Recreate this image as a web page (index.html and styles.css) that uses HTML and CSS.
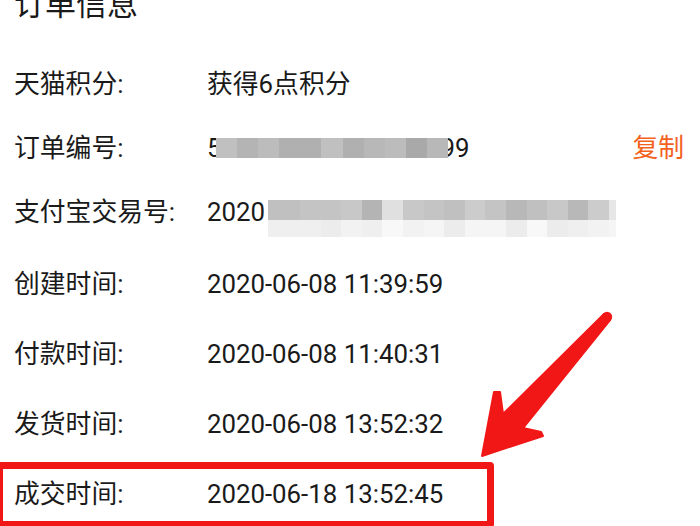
FILE: index.html
```html
<!DOCTYPE html>
<html lang="zh-CN">
<head>
<meta charset="utf-8">
<title>订单信息</title>
<link rel="stylesheet" href="styles.css">
</head>
<body>
<div class="page">
  <h2 class="title">订单信息</h2>
  <div class="rows">
    <div class="row short">
      <span class="label">天猫积分:</span>
      <span class="value">获得6点积分</span>
    </div>
    <div class="row short">
      <span class="label">订单编号:</span>
      <span class="value">
        <span class="txt">5</span>
        <span class="mosaic order">
          <i class="g-c0"></i><i class="g-b4"></i><i class="g-bc"></i><i class="g-b0"></i><i class="g-b0"></i><i class="g-c0"></i><i class="g-b0"></i><i class="g-b8"></i><i class="g-bc"></i><i class="g-a9"></i><i class="g-b8"></i>
        </span>
        <span class="txt tail">99</span>
      </span>
      <span class="copy">复制</span>
    </div>
    <div class="row alipay">
      <span class="label">支付宝交易号:</span>
      <span class="value top">
        <span class="txt">2020</span>
        <span class="mosaic pay">
          <i class="g-c0"></i><i class="g-c4"></i><i class="g-c4"></i><i class="g-c8"></i><i class="g-b4"></i><i class="g-e0"></i><i class="g-c8"></i><i class="g-c4"></i><i class="g-c0"></i><i class="g-cc"></i><i class="g-c4"></i><i class="g-b8"></i><i class="g-c0"></i><i class="g-c8"></i><i class="g-b8"></i><i class="g-cc"></i><i class="g-e6"></i>
          <i class="g-ef"></i><i class="g-ef"></i><i class="g-ec"></i><i class="g-f2"></i><i class="g-ef"></i><i class="g-f8"></i><i class="g-f2"></i><i class="g-f5"></i><i class="g-ec"></i><i class="g-f5"></i><i class="g-f5"></i><i class="g-ec"></i><i class="g-f8"></i><i class="g-ec"></i><i class="g-ef"></i><i class="g-f2"></i><i class="g-f5"></i>
        </span>
      </span>
    </div>
    <div class="row">
      <span class="label">创建时间:</span>
      <span class="value">2020-06-08 11:39:59</span>
    </div>
    <div class="row">
      <span class="label">付款时间:</span>
      <span class="value">2020-06-08 11:40:31</span>
    </div>
    <div class="row">
      <span class="label">发货时间:</span>
      <span class="value">2020-06-08 13:52:32</span>
    </div>
    <div class="row">
      <span class="label">成交时间:</span>
      <span class="value">2020-06-18 13:52:45</span>
    </div>
  </div>
  <div class="highlight"></div>
  <svg class="arrow" viewBox="0 0 700 526" width="700" height="526" aria-hidden="true">
    <path d="M604 314 L503 414 L500 392 L494 392 L482 456 L543 436 L541 432 L523 428 L610 320 Z" />
    <circle cx="607" cy="317" r="4.2" />
  </svg>
</div>
</body>
</html>
```

FILE: styles.css
```css
html, body {
  margin: 0;
  padding: 0;
  background: #ffffff;
  overflow: hidden;
}

.page {
  position: relative;
  display: flow-root;
  width: 700px;
  height: 526px;
  overflow: hidden;
  box-sizing: border-box;
  padding: 0 16px 0 14px;
  font-family: Roboto, "Noto Sans CJK SC", sans-serif;
  font-size: 25.8px;
  line-height: 30px;
  color: #1a1a1a;
}

.title {
  margin: -18px 0 0;
  height: 70px;
  font-family: "Noto Sans CJK SC", sans-serif;
  font-size: 31px;
  font-weight: normal;
  line-height: 40px;
  color: #1a1a1a;
}

.row {
  display: flex;
  align-items: center;
  height: 70px;
}

.row.short {
  height: 64px;
}

.row.alipay {
  height: 69px;
  align-items: flex-start;
  box-sizing: border-box;
  padding-top: 17px;
}

.label {
  flex: none;
  width: 193px;
  white-space: nowrap;
}

.value {
  flex: 1;
  display: flex;
  align-items: center;
  white-space: nowrap;
}

.value.top {
  align-items: flex-start;
}

.copy {
  flex: none;
  color: #f3611d;
}

.mosaic {
  position: relative;
  z-index: 1;
  display: grid;
}

.mosaic i {
  display: block;
}

.mosaic.order {
  width: 233px;
  height: 20px;
  margin-left: -6px;
  grid-template-columns: repeat(11, 1fr);
}

.tail {
  margin-left: -8px;
}

.mosaic.pay {
  width: 348px;
  margin-left: 3px;
  margin-top: 3px;
  grid-template-columns: 32px repeat(15, 1fr) 7px;
  grid-template-rows: 20px 17px;
}

.g-a9 { background: #a9a9a9; }
.g-b0 { background: #b0b0b0; }
.g-b4 { background: #b4b4b4; }
.g-b8 { background: #b8b8b8; }
.g-bc { background: #bcbcbc; }
.g-c0 { background: #c0c0c0; }
.g-c4 { background: #c4c4c4; }
.g-c8 { background: #c8c8c8; }
.g-cc { background: #cccccc; }
.g-e0 { background: #e0e0e0; }
.g-e6 { background: #e6e6e6; }
.g-ec { background: #ececec; }
.g-ef { background: #efefef; }
.g-f2 { background: #f2f2f2; }
.g-f5 { background: #f5f5f5; }
.g-f8 { background: #f8f8f8; }

.highlight {
  position: absolute;
  left: -4px;
  top: 462px;
  width: 498px;
  height: 66px;
  box-sizing: border-box;
  border: 7px solid #f21717;
  border-radius: 4px;
}

.arrow {
  position: absolute;
  left: 0;
  top: 0;
  pointer-events: none;
}

.arrow path,
.arrow circle {
  fill: #f21717;
  stroke: #f21717;
  stroke-width: 2;
  stroke-linejoin: round;
}
```
